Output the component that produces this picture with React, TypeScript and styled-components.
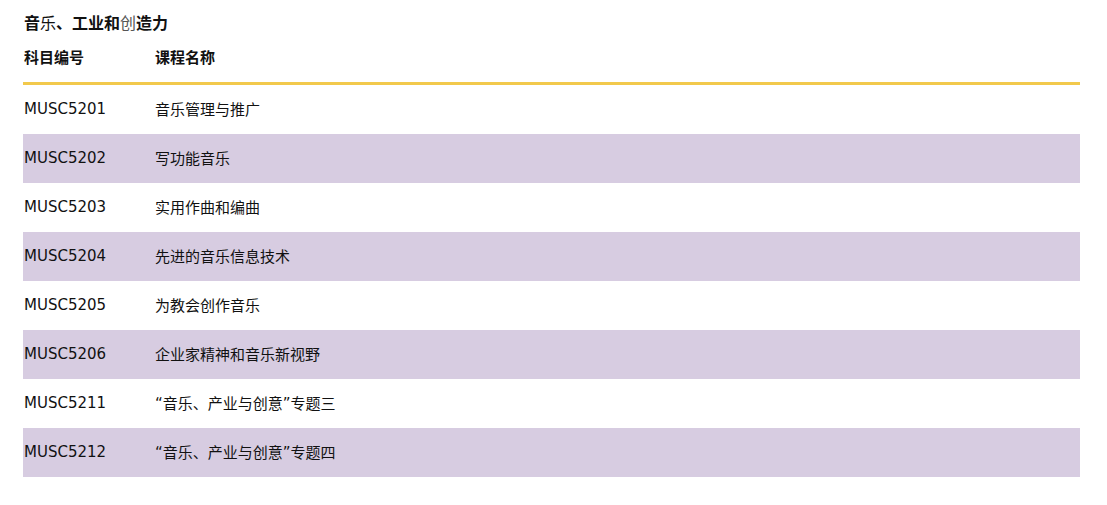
import * as React from "react";
import styled, { createGlobalStyle } from "styled-components";

const GlobalStyle = createGlobalStyle`
  body {
    margin: 0;
    background: #ffffff;
    font-family: "DejaVu Sans", "Noto Sans CJK SC", sans-serif;
    color: #111;
  }
`;

const Page = styled.div`
  padding: 10px 27px 0 23px;
  width: 1057px;
`;

const Title = styled.h3`
  margin: 0;
  font-size: 16px;
  line-height: 24px;
  font-weight: 700;
  padding-left: 1px;
  font-family: "Noto Sans CJK SC", sans-serif;
`;

const Light = styled.span<{ $muted?: boolean }>`
  font-weight: 400;
  color: ${({ $muted }) => ($muted ? "#555" : "inherit")};
`;

const Row = styled.div<{ $shade?: boolean; $head?: boolean }>`
  display: grid;
  grid-template-columns: 131px 1fr;
  align-items: center;
  box-sizing: border-box;
  height: ${({ $head }) => ($head ? "51px" : "49px")};
  padding-bottom: ${({ $head }) => ($head ? "4px" : "2px")};
  background: ${({ $shade }) => ($shade ? "#d7cce1" : "transparent")};
  border-bottom: ${({ $head }) => ($head ? "3px solid #f2c94c" : "none")};
  font-size: 15px;
  font-weight: ${({ $head }) => ($head ? 700 : 400)};
`;

const Cell = styled.div`
  padding-left: 1px;
  white-space: nowrap;
`;

const courses = [
  ["MUSC5201", "音乐管理与推广"],
  ["MUSC5202", "写功能音乐"],
  ["MUSC5203", "实用作曲和编曲"],
  ["MUSC5204", "先进的音乐信息技术"],
  ["MUSC5205", "为教会创作音乐"],
  ["MUSC5206", "企业家精神和音乐新视野"],
  ["MUSC5211", "“音乐、产业与创意”专题三"],
  ["MUSC5212", "“音乐、产业与创意”专题四"],
];

export default function App() {
  return (
    <Page>
      <GlobalStyle />
      <Title>
        音<Light>乐</Light>、工业和<Light $muted>创</Light>造力
      </Title>
      <Row $head>
        <Cell>科目编号</Cell>
        <Cell>课程名称</Cell>
      </Row>
      {courses.map(([code, name], i) => (
        <Row key={code} $shade={i % 2 === 1}>
          <Cell>{code}</Cell>
          <Cell>{name}</Cell>
        </Row>
      ))}
    </Page>
  );
}
